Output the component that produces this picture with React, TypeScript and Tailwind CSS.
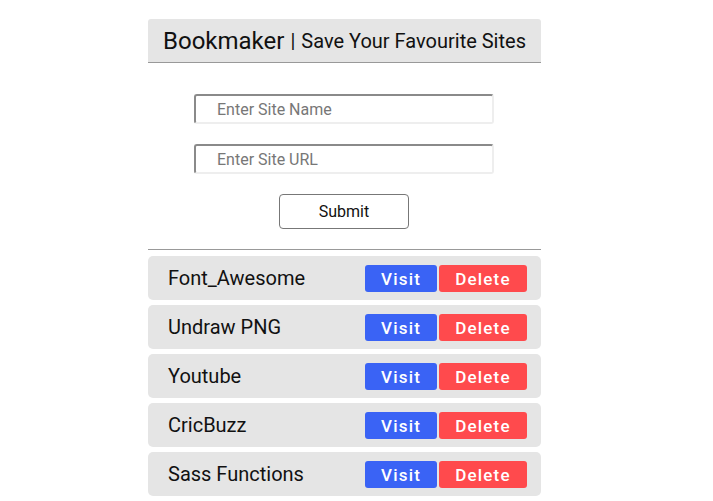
const sites = ["Font_Awesome", "Undraw PNG", "Youtube", "CricBuzz", "Sass Functions"];

export default function App() {
  return (
    <div className="min-h-[501px] bg-white font-['Roboto',sans-serif] text-[#111]">
      <div className="ml-[148px] w-[393px] pt-[19px]">
        <header className="flex h-[44px] items-center rounded-t-[3px] border-b border-[#999] bg-[#e5e5e5] pl-[15px]">
          <span className="text-[24px] leading-none">Bookmaker</span>
          <span className="ml-[6px] text-[20px] leading-none">|</span>
          <span className="ml-[6px] text-[20px] leading-none">Save Your Favourite Sites</span>
        </header>

        <form className="flex flex-col items-start pl-[46px] pt-[31px]" onSubmit={(e) => e.preventDefault()}>
          <input
            placeholder="Enter Site Name"
            className="h-[30px] w-[300px] rounded-[3px] border-2 border-t-[#8a8a8a] border-l-[#8a8a8a] border-r-[#eeeeee] border-b-[#eeeeee] pl-[21px] text-[16px] outline-none placeholder:text-[#777]"
          />
          <input
            placeholder="Enter Site URL"
            className="mt-[20px] h-[30px] w-[300px] rounded-[3px] border-2 border-t-[#8a8a8a] border-l-[#8a8a8a] border-r-[#eeeeee] border-b-[#eeeeee] pl-[21px] text-[16px] outline-none placeholder:text-[#777]"
          />
          <button
            type="submit"
            className="ml-[85px] mt-[20px] h-[35px] w-[130px] rounded-[4px] border border-[#777] bg-white text-[16px] text-[#111]"
          >
            Submit
          </button>
        </form>

        <div className="mt-[20px] border-t border-[#999]" />

        <ul className="mt-[6px] flex flex-col gap-[5px]">
          {sites.map((s) => (
            <li key={s} className="flex h-[44px] items-center rounded-[5px] bg-[#e5e5e5] pl-[20px] pr-[14px]">
              <span className="flex-1 text-[20px]">{s}</span>
              <button className="h-[27px] w-[72px] rounded-[3px] bg-[#3a63f5] pt-[2px] text-[17px] font-medium tracking-[0.07em] text-white">
                Visit
              </button>
              <button className="ml-[2px] h-[27px] w-[88px] rounded-[3px] bg-[#ff4a4d] pt-[2px] text-[17px] font-medium tracking-[0.07em] text-white">
                Delete
              </button>
            </li>
          ))}
        </ul>
      </div>
    </div>
  );
}
